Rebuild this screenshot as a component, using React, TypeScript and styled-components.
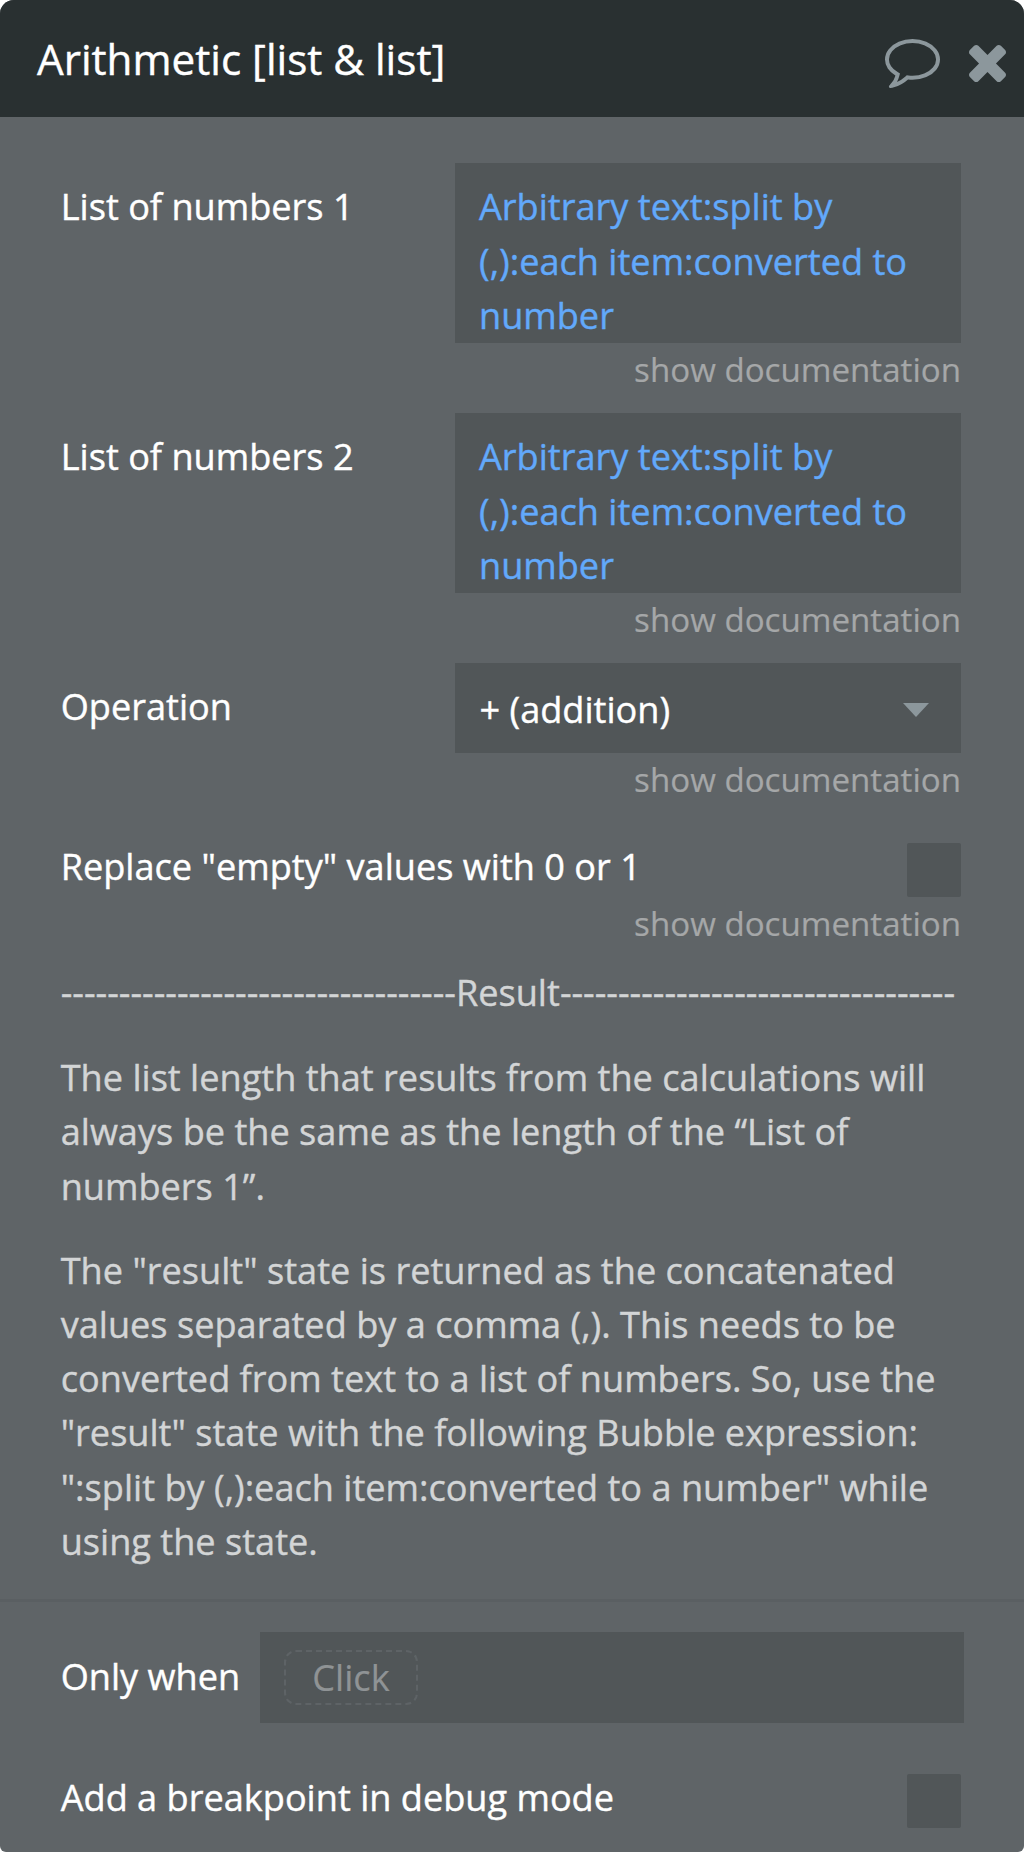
import React from "react";
import styled, { createGlobalStyle } from "styled-components";

const GlobalStyle = createGlobalStyle`
  * { box-sizing: border-box; }
  body { margin: 0; background: #fff; font-family: "Open Sans", sans-serif; }
`;

const Panel = styled.main`
  width: 1024px;
  height: 1852px;
  overflow: hidden;
  border-radius: 14px 14px 6px 6px;
  background: #5f6467;
  color: #fff;
  font-size: 36.14px;
  line-height: 54.2px;
  -webkit-text-stroke: 0.4px currentColor;
`;

const Header = styled.header`
  display: flex;
  align-items: center;
  height: 117px;
  padding: 0 18px 0 37px;
  background: #293031;
`;

const Title = styled.h1`
  flex: 1;
  margin: 0;
  padding-top: 1px;
  font-size: 42.2px;
  font-weight: 400;
`;

const IconButton = styled.button<{ $gap?: number }>`
  display: flex;
  margin: 0 0 0 ${(p) => p.$gap ?? 0}px;
  padding: 10px 0 0;
  border: 0;
  background: none;
  color: #8c979c;
`;

const Form = styled.section`
  display: flex;
  flex-direction: column;
  height: 1485px;
  padding: 46px 63px 0 60.7px;
  border-bottom: 3px solid #5a5f62;
`;

const Row = styled.div<{ $height: number }>`
  display: flex;
  justify-content: space-between;
  height: ${(p) => p.$height}px;
`;

const Label = styled.label<{ $top?: number }>`
  margin-top: ${(p) => p.$top ?? 16}px;
  white-space: nowrap;
`;

const Expression = styled.div`
  width: 506px;
  height: 180px;
  padding: 16.4px 20px 0 24px;
  background: #515658;
  color: #62a9fb;
`;

const Select = styled.div`
  display: flex;
  align-items: center;
  justify-content: space-between;
  width: 506px;
  height: 90px;
  padding: 3px 32px 0 24.5px;
  background: #515658;
`;

const Checkbox = styled.div`
  width: 54px;
  height: 54px;
  border-radius: 2px;
  background: #515658;
`;

const DocLink = styled.a<{ $space: number }>`
  align-self: flex-end;
  height: ${(p) => p.$space}px;
  font-size: 33.13px;
  color: #a5a7a8;
  -webkit-text-stroke-width: 0.2px;
  white-space: nowrap;
`;

const Paragraph = styled.p<{ $after?: number }>`
  margin: 0 0 ${(p) => p.$after ?? 0}px;
  color: #d3d5d6;
`;

const Line = styled.span`
  display: block;
  white-space: nowrap;
`;

const Footer = styled.section`
  padding: 30px 60px 0 60.7px;
`;

const Condition = styled.div`
  display: flex;
  align-items: center;
  width: 704px;
  height: 91px;
  padding-left: 24px;
  background: #515658;
`;

const BreakpointRow = styled(Row)`
  padding-right: 3px;
`;

const Chip = styled.span`
  display: flex;
  align-items: center;
  justify-content: center;
  width: 134px;
  height: 55px;
  border: 2px dashed #5e6366;
  border-radius: 12px;
  color: #8f9395;
  -webkit-text-stroke-width: 0.2px;
`;

const CommentIcon = () => (
  <svg width="55" height="49" viewBox="0 256 1792 1536" preserveAspectRatio="none" fill="currentColor">
    <path d="M896 384q-204 0-381.5 69.5t-282 187.5-104.5 255q0 112 71.5 213.5t201.5 175.5l87 50-27 96q-24 91-70 172 152-63 275-171l43-38 57 6q69 8 130 8 204 0 381.5-69.5t282-187.5 104.5-255-104.5-255-282-187.5-381.5-69.5zm896 512q0 174-120 321.5t-326 233-450 85.5q-70 0-145-8-198 175-460 242-49 14-114 22h-5q-15 0-27-10.5t-16-27.5v-1q-3-4-.5-12t2-10 4.5-9.5l6-9 7-8.5 8-9q7-8 31-34.5t34.5-38 31-39.5 32.5-51 27-59 26-76q-157-89-247.5-220t-90.5-281q0-174 120-321.5t326-233 450-85.5 450 85.5 326 233 120 321.5z" />
  </svg>
);

const CloseIcon = () => (
  <svg width="37" height="37" viewBox="302 366 1188 1188" fill="currentColor">
    <path d="M1490 1322q0 40-28 68l-136 136q-28 28-68 28t-68-28l-294-294-294 294q-28 28-68 28t-68-28l-136-136q-28-28-28-68t28-68l294-294-294-294q-28-28-28-68t28-68l136-136q28-28 68-28t68 28l294 294 294-294q28-28 68-28t68 28l136 136q28 28 28 68t-28 68l-294 294 294 294q28 28 28 68z" />
  </svg>
);

const Caret = () => (
  <svg width="26" height="15" viewBox="0 0 26 15" fill="#8c979c">
    <path d="M0 1H26L13 15Z" />
  </svg>
);

const expression = ["Arbitrary text:split by", "(,):each item:converted to", "number"];

const lengthNote = [
  "The list length that results from the calculations will",
  "always be the same as the length of the “List of",
  "numbers 1”.",
];

const resultNote = [
  'The "result" state is returned as the concatenated',
  "values separated by a comma (,). This needs to be",
  "converted from text to a list of numbers. So, use the",
  '"result" state with the following Bubble expression:',
  '":split by (,):each item:converted to a number" while',
  "using the state.",
];

const Lines = ({ items }: { items: string[] }) => (
  <>
    {items.map((text) => (
      <Line key={text}>{text}</Line>
    ))}
  </>
);

const dashes = "-".repeat(34);

export default function App() {
  return (
    <>
      <GlobalStyle />
      <Panel>
        <Header>
          <Title><Line>Arithmetic [list &amp; list]</Line></Title>
          <IconButton aria-label="Comment"><CommentIcon /></IconButton>
          <IconButton aria-label="Close" $gap={29}><CloseIcon /></IconButton>
        </Header>
        <Form>
          <Row $height={180}>
            <Label><Line>List of numbers 1</Line></Label>
            <Expression><Lines items={expression} /></Expression>
          </Row>
          <DocLink $space={70}><Line>show documentation</Line></DocLink>
          <Row $height={180}>
            <Label><Line>List of numbers 2</Line></Label>
            <Expression><Lines items={expression} /></Expression>
          </Row>
          <DocLink $space={70}><Line>show documentation</Line></DocLink>
          <Row $height={90}>
            <Label><Line>Operation</Line></Label>
            <Select><Line>+ (addition)</Line><Caret /></Select>
          </Row>
          <DocLink $space={90}><Line>show documentation</Line></DocLink>
          <Row $height={54}>
            <Label $top={-4}><Line>Replace "empty" values with 0 or 1</Line></Label>
            <Checkbox />
          </Row>
          <DocLink $space={68}><Line>show documentation</Line></DocLink>
          <Paragraph $after={31}><Line>{dashes}Result{dashes}</Line></Paragraph>
          <Paragraph $after={30}><Lines items={lengthNote} /></Paragraph>
          <Paragraph><Lines items={resultNote} /></Paragraph>
        </Form>
        <Footer>
          <Row $height={142}>
            <Label $top={17}><Line>Only when</Line></Label>
            <Condition><Chip><Line>Click</Line></Chip></Condition>
          </Row>
          <BreakpointRow $height={54}>
            <Label $top={-4}><Line>Add a breakpoint in debug mode</Line></Label>
            <Checkbox />
          </BreakpointRow>
        </Footer>
      </Panel>
    </>
  );
}
